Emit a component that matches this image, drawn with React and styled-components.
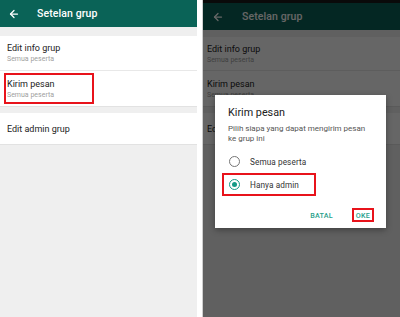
import React from "react";
import styled, { createGlobalStyle } from "styled-components";
import { ArrowLeft } from "lucide-react";

const Global = createGlobalStyle`
  html, body { margin: 0; padding: 0; background: #ffffff; }
  body { font-family: Roboto, "Noto Sans", "Liberation Sans", sans-serif; }
`;

const Page = styled.div`
  display: flex;
  gap: 5px;
  width: 400px;
  height: 317px;
  overflow: hidden;
  background: #ffffff;
`;

const Panel = styled.div`
  position: relative;
  width: ${(p) => p.$w}px;
  height: 317px;
  flex: none;
  display: flex;
  flex-direction: column;
  background: #efefef;
  overflow: hidden;
  border-left: ${(p) => (p.$bordered ? "1px solid #cfcfcf" : "none")};
`;

const StatusBar = styled.div`
  height: ${(p) => p.$h}px;
  background: #1a1a1a;
  flex: none;
`;

const Header = styled.div`
  height: 27px;
  flex: none;
  display: flex;
  align-items: center;
  padding-left: ${(p) => p.$pad}px;
  gap: ${(p) => p.$gap}px;
  background: #0a6357;
  color: #ffffff;
`;

const HeaderTitle = styled.span`
  font-size: 10.5px;
  font-weight: 500;
  letter-spacing: 0.1px;
`;

const Spacer = styled.div`
  height: ${(p) => p.$h}px;
  flex: none;
`;

const Section = styled.div`
  background: #ffffff;
  flex: none;
  box-shadow: 0 1px 0 #e2e2e2;
`;

const Item = styled.div`
  height: ${(p) => p.$h}px;
  display: flex;
  flex-direction: column;
  justify-content: center;
  align-items: flex-start;
  padding-left: ${(p) => p.$pad}px;
  border-bottom: ${(p) => (p.$divider ? "1px solid #e8e8e8" : "none")};
  box-sizing: border-box;
`;

const Highlight = styled.div`
  width: 90px;
  height: 31px;
  box-sizing: border-box;
  border: 2px solid #e8131b;
  margin-left: -3px;
  padding-left: 1px;
  display: flex;
  flex-direction: column;
  justify-content: center;
`;

const ItemTitle = styled.div`
  font-size: 9px;
  line-height: 12px;
  color: #222222;
`;

const ItemSub = styled.div`
  font-size: 7px;
  line-height: 10px;
  color: #a0a0a0;
`;

const Overlay = styled.div`
  position: absolute;
  inset: 0;
  background: rgba(0, 0, 0, 0.6);
`;

const Dialog = styled.div`
  position: absolute;
  left: 12px;
  top: 95px;
  width: 171px;
  background: #ffffff;
  box-shadow: 0 2px 6px rgba(0, 0, 0, 0.35);
  padding-top: 12px;
  padding-bottom: 6px;
  box-sizing: border-box;
`;

const DialogTitle = styled.div`
  font-size: 10.8px;
  line-height: 12px;
  color: #212121;
  padding-left: 13px;
`;

const DialogText = styled.div`
  margin-top: 5px;
  font-size: 8px;
  line-height: 10px;
  color: #555555;
  padding-left: 13px;
  white-space: nowrap;
`;

const Options = styled.div`
  margin-top: 6px;
  display: flex;
  flex-direction: column;
`;

const Option = styled.div`
  height: 23px;
  width: 94px;
  box-sizing: border-box;
  margin-left: 7px;
  border: 2px solid ${(p) => (p.$marked ? "#e8131b" : "transparent")};
  display: flex;
  align-items: center;
  padding-left: 5px;
  gap: 10px;
`;

const Radio = styled.span`
  width: 11px;
  height: 11px;
  box-sizing: border-box;
  border-radius: 50%;
  border: 1.5px solid ${(p) => (p.$on ? "#149b86" : "#757575")};
  display: flex;
  align-items: center;
  justify-content: center;
  flex: none;
  &::after {
    content: "";
    display: ${(p) => (p.$on ? "block" : "none")};
    width: 5px;
    height: 5px;
    border-radius: 50%;
    background: #149b86;
  }
`;

const OptionLabel = styled.span`
  font-size: 8.2px;
  color: #333333;
  letter-spacing: 0.1px;
`;

const Actions = styled.div`
  margin-top: 12px;
  display: flex;
  justify-content: flex-end;
  align-items: center;
  gap: 15px;
  padding-right: 12px;
`;

const ActionBtn = styled.span`
  height: 14px;
  box-sizing: border-box;
  display: flex;
  align-items: center;
  padding: 0 2px;
  border: 2px solid ${(p) => (p.$marked ? "#e8131b" : "transparent")};
  font-size: 7.2px;
  font-weight: 500;
  color: #2a9f8c;
  letter-spacing: 0.2px;
`;

function Screen({ right }) {
  return (
    <>
      {right && <StatusBar $h={3} />}
      <Header $pad={right ? 9 : 8} $gap={right ? 18 : 17}>
        <ArrowLeft size={12} strokeWidth={2.5} color="#ffffff" />
        <HeaderTitle>Setelan grup</HeaderTitle>
      </Header>
      <Spacer $h={right ? 7 : 9} />
      <Section>
        <Item $h={right ? 34 : 35} $pad={right ? 4 : 7} $divider>
          <ItemTitle>Edit info grup</ItemTitle>
          <ItemSub>Semua peserta</ItemSub>
        </Item>
        <Item $h={35} $pad={right ? 4 : 7}>
          {right ? (
            <>
              <ItemTitle>Kirim pesan</ItemTitle>
              <ItemSub>Semua peserta</ItemSub>
            </>
          ) : (
            <Highlight>
              <ItemTitle>Kirim pesan</ItemTitle>
              <ItemSub>Semua peserta</ItemSub>
            </Highlight>
          )}
        </Item>
      </Section>
      <Spacer $h={7} />
      <Section>
        <Item $h={31} $pad={right ? 4 : 7}>
          <ItemTitle>Edit admin grup</ItemTitle>
        </Item>
      </Section>
    </>
  );
}

export default function App() {
  return (
    <>
      <Global />
      <Page>
        <Panel $w={197}>
          <Screen />
        </Panel>
        <Panel $w={198} $bordered>
          <Screen right />
          <Overlay />
          <Dialog>
            <DialogTitle>Kirim pesan</DialogTitle>
            <DialogText>
              Pilih siapa yang dapat mengirim pesan
              <br />
              ke grup ini
            </DialogText>
            <Options>
              <Option>
                <Radio />
                <OptionLabel>Semua peserta</OptionLabel>
              </Option>
              <Option $marked>
                <Radio $on />
                <OptionLabel>Hanya admin</OptionLabel>
              </Option>
            </Options>
            <Actions>
              <ActionBtn>BATAL</ActionBtn>
              <ActionBtn $marked>OKE</ActionBtn>
            </Actions>
          </Dialog>
        </Panel>
      </Page>
    </>
  );
}
